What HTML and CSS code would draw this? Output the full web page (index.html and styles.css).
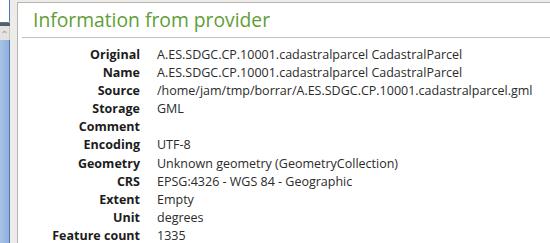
FILE: index.html
```html
<!doctype html>
<html lang="en">
<head>
  <meta charset="UTF-8">
  <title>Layer properties - Information</title>
  <link rel="stylesheet" href="styles.css">
</head>
<body>
  <div class="side">
    <div class="side-box"></div>
    <div class="side-bar"></div>
    <div class="side-btn">&#x2303;</div>
    <div class="side-thumb"></div>
  </div>
  <main class="panel">
    <h1 class="title">Information from provider</h1>
    <hr class="rule">
    <dl class="info">
      <dt>Original</dt><dd>A.ES.SDGC.CP.10001.cadastralparcel CadastralParcel</dd>
      <dt>Name</dt><dd>A.ES.SDGC.CP.10001.cadastralparcel CadastralParcel</dd>
      <dt>Source</dt><dd>/home/jam/tmp/borrar/A.ES.SDGC.CP.10001.cadastralparcel.gml</dd>
      <dt>Storage</dt><dd>GML</dd>
      <dt>Comment</dt><dd></dd>
      <dt>Encoding</dt><dd>UTF-8</dd>
      <dt>Geometry</dt><dd>Unknown geometry (GeometryCollection)</dd>
      <dt>CRS</dt><dd>EPSG:4326 - WGS 84 - Geographic</dd>
      <dt>Extent</dt><dd>Empty</dd>
      <dt>Unit</dt><dd>degrees</dd>
      <dt>Feature count</dt><dd>1335</dd>
    </dl>
  </main>
</body>
</html>
```
FILE: styles.css
```css
* {
  box-sizing: border-box;
}
html, body {
  margin: 0;
  height: 100%;
  overflow: hidden;
}
body {
  display: flex;
  background: #edeceb;
  font-family: "Open Sans", "DejaVu Sans", sans-serif;
  font-size: 12.5px;
  color: #2b2b2b;
}
.side {
  width: 10px;
  display: flex;
  flex-direction: column;
  margin-right: 7px;
}
.side-box {
  height: 23px;
  background: #fff;
  border: 1px solid #4f79b4;
  border-left: none;
  border-top: none;
  border-bottom-right-radius: 2px;
}
.side-bar {
  height: 3px;
  background: #5d5d5d;
}
.side-btn {
  height: 14px;
  background: #e4e3e1;
  color: #9a9a9a;
  font-size: 10px;
  line-height: 16px;
  text-align: center;
  overflow: hidden;
  border-right: 1px solid #c8c6c3;
}
.side-thumb {
  flex: 1;
  background: linear-gradient(to right, #a9c3e6, #8eb0dd);
  border-right: 1px solid #5878a8;
}
.panel {
  flex: 1;
  margin-top: 2px;
  background: #fff;
  border-left: 1px solid #b7b3ad;
  border-top: 1px solid #b7b3ad;
}
.title {
  margin: 0;
  padding: 5px 0 0 15px;
  height: 34px;
  font-size: 19.3px;
  font-weight: normal;
  line-height: 24px;
  color: #5f9e36;
}
.rule {
  margin: 0 0 0 4px;
  border: none;
  border-top: 1px solid #c4c2bf;
  height: 0;
}
.info {
  display: grid;
  grid-template-columns: 122px 1fr;
  column-gap: 17px;
  margin: 8px 0 0;
  line-height: 18.1px;
  white-space: nowrap;
}
.info dt {
  text-align: right;
  font-weight: bold;
  color: #1c1c1c;
}
.info dd {
  margin: 0;
  min-height: 18.1px;
}
```
